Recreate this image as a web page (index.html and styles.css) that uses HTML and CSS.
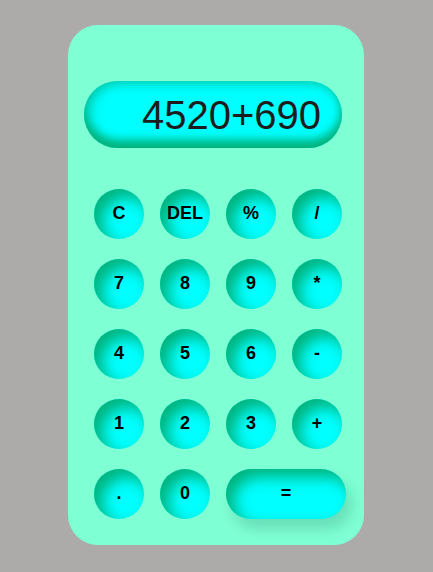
FILE: index.html
```html
<!DOCTYPE html>
<html>
<head>
<meta charset="utf-8">
<link rel="stylesheet" href="styles.css">
</head>
<body>
<div class="calc">
  <div class="display">4520+690</div>
  <div class="keys">
    <button class="key">C</button>
    <button class="key">DEL</button>
    <button class="key">%</button>
    <button class="key">/</button>
    <button class="key">7</button>
    <button class="key">8</button>
    <button class="key">9</button>
    <button class="key">*</button>
    <button class="key">4</button>
    <button class="key">5</button>
    <button class="key">6</button>
    <button class="key">-</button>
    <button class="key">1</button>
    <button class="key">2</button>
    <button class="key">3</button>
    <button class="key">+</button>
    <button class="key">.</button>
    <button class="key">0</button>
    <button class="key equal">=</button>
  </div>
</div>
</body>
</html>
```
FILE: styles.css
```css
html, body {
  margin: 0;
  height: 100%;
}
body {
  background: #adabaa;
  display: flex;
  align-items: center;
  justify-content: center;
  font-family: "Liberation Sans", Arial, sans-serif;
}
.calc {
  width: 296px;
  height: 520px;
  box-sizing: border-box;
  background: #7fffd4;
  border-radius: 30px;
  padding: 56px 0 0 16px;
  margin: 0 1px 2px 0;
}
.display {
  width: 258px;
  height: 67px;
  box-sizing: border-box;
  border-radius: 34px;
  background: #00ffff;
  box-shadow: inset 0 -8px 10px #00b27a, inset 8px 0 12px rgba(0,170,120,0.35), inset 0 4px 8px rgba(0,170,120,0.35);
  font-size: 40px;
  color: #1c1c1c;
  text-align: right;
  line-height: 68px;
  padding-right: 21px;
}
.keys {
  margin: 41px 0 0 10px;
  display: grid;
  grid-template-columns: repeat(4, 50px);
  grid-auto-rows: 50px;
  column-gap: 16px;
  row-gap: 20px;
}
.key {
  border: none;
  padding: 0 0 1px 0;
  margin: 0;
  width: 50px;
  height: 50px;
  border-radius: 50%;
  background: #00ffff;
  box-shadow: inset 8px 8px 15px #00b27a;
  font-family: "Liberation Sans", Arial, sans-serif;
  font-weight: bold;
  font-size: 18px;
  color: #000;
}
.key.equal {
  grid-column: span 2;
  width: 120px;
  border-radius: 25px;
  box-shadow: inset 8px 8px 15px #00b27a, 6px 10px 14px rgba(0,80,60,0.18);
}
```
